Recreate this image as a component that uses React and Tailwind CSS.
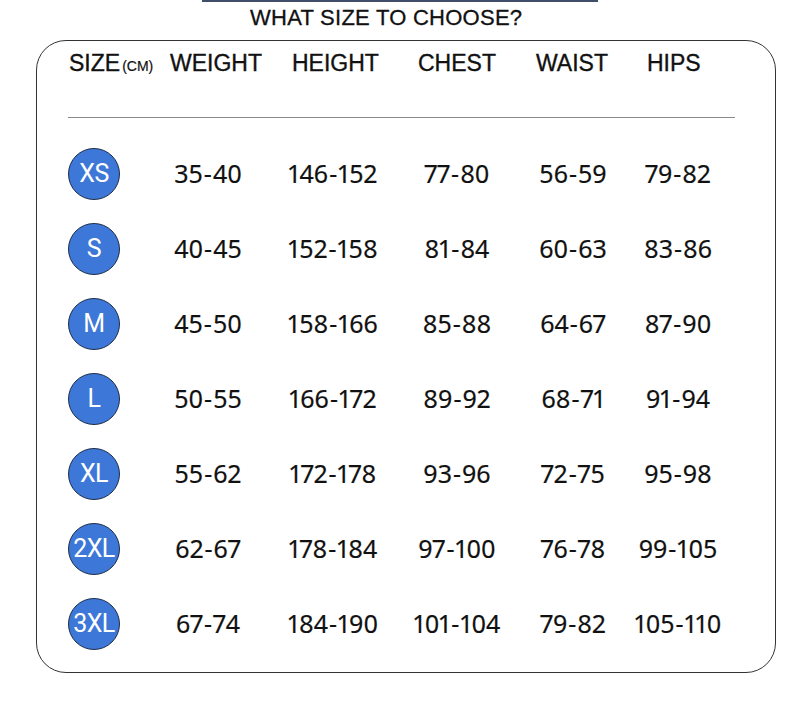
import React from "react";

const rows = [
  ["XS", "35-40", "146-152", "77-80", "56-59", "79-82"],
  ["S", "40-45", "152-158", "81-84", "60-63", "83-86"],
  ["M", "45-50", "158-166", "85-88", "64-67", "87-90"],
  ["L", "50-55", "166-172", "89-92", "68-71", "91-94"],
  ["XL", "55-62", "172-178", "93-96", "72-75", "95-98"],
  ["2XL", "62-67", "178-184", "97-100", "76-78", "99-105"],
  ["3XL", "67-74", "184-190", "101-104", "79-82", "105-110"],
];

export default function App() {
  return (
    <div className="w-[788px] h-[728px] bg-white overflow-hidden">
      <div className="ml-[202px] w-[396px] h-[2px] bg-[#3f4f6a]" />
      <div className="h-[32px] flex items-center pl-[250px] font-['Liberation_Sans',Arial,sans-serif] text-[22px] tracking-[0.25px] text-[#111] leading-none [-webkit-text-stroke:0.3px_#111]">
        WHAT SIZE TO CHOOSE?
      </div>
      <div className="mt-[6px] ml-[36px] w-[740px] h-[633px] border border-[#333] rounded-[30px]">
        <div className="h-[44px] grid grid-cols-[101px_122px_126px_118px_111px_1fr] pl-[32px] items-center font-['Liberation_Sans',Arial,sans-serif] text-[23px] text-[#111] leading-none [-webkit-text-stroke:0.35px_#111]">
          <div className="flex items-baseline whitespace-nowrap">
            <span>SIZE</span>
            <span className="text-[14px] ml-[2px] [-webkit-text-stroke:0.2px_#111]">(CM)</span>
          </div>
          <div>WEIGHT</div>
          <div>HEIGHT</div>
          <div>CHEST</div>
          <div>WAIST</div>
          <div>HIPS</div>
        </div>
        <div className="mt-[32px] ml-[31px] w-[667px] h-px bg-[#8a8a8a]" />
        <div className="mt-[18px]">
          {rows.map((r) => (
            <div
              key={r[0]}
              className="h-[75px] grid grid-cols-[114px_114px_136px_112px_120px_90px] items-center font-['Noto_Sans',sans-serif] text-[25px] text-[#111] proportional-nums"
            >
              <div className="flex justify-center">
                <div className="w-[52px] h-[52px] rounded-full bg-[#3d78d8] border border-[#1e2e4a] flex items-center justify-center text-white font-['Roboto',sans-serif] text-[25px] leading-none tracking-[-0.5px]">
                  {r[0]}
                </div>
              </div>
              {r.slice(1).map((v, i) => {
                const [a, b] = v.split("-");
                return (
                  <div key={i} className="text-center leading-none whitespace-nowrap [-webkit-text-stroke:0.2px_#111]">
                    {a}
                    <span className="mx-[1px]">-</span>
                    {b}
                  </div>
                );
              })}
            </div>
          ))}
        </div>
      </div>
    </div>
  );
}
